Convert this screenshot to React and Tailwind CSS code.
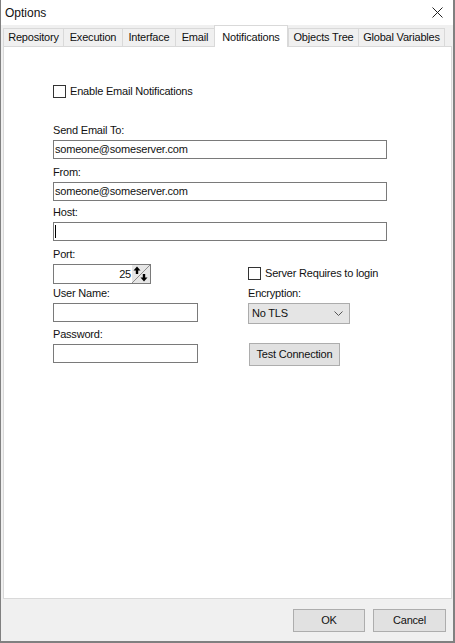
import React from 'react';

const tabs = [
  { name: 'Repository', w: 'w-[61px]' },
  { name: 'Execution', w: 'w-[60px]' },
  { name: 'Interface', w: 'w-[54px]' },
  { name: 'Email', w: 'w-[40px]' },
  { name: 'Notifications', w: 'w-[74px]', active: true },
  { name: 'Objects Tree', w: 'w-[71px]' },
  { name: 'Global Variables', w: 'w-[87px]' },
];

const Label = ({ children }) => <div className="h-[16px] leading-[16px] mb-[2px]">{children}</div>;

const TextBox = ({ value, w, caret }) => (
  <div className={`h-[19px] ${w} border border-[#7a7a7a] bg-white px-[1px] flex items-center leading-none`}>
    {caret ? <span className="w-px h-[13px] bg-black" /> : value}
  </div>
);

const CheckBox = ({ label }) => (
  <div className="flex items-center gap-[4px] h-[13px]">
    <span className="w-[13px] h-[13px] border border-[#333] bg-white" />
    <span>{label}</span>
  </div>
);

const SpinButtons = () => (
  <svg width="18" height="18" viewBox="0 0 18 18" className="block">
    <rect x="0" y="0" width="18" height="18" fill="#e6e6e6" />
    <line x1="0" y1="18" x2="18" y2="0" stroke="#8c8c8c" strokeWidth="1" />
    <path d="M5 1.5 L8.5 5.5 H6.2 V9 H3.8 V5.5 H1.5 Z" fill="#000" />
    <path d="M12 16.5 L8.5 12.5 H10.8 V9 H13.2 V12.5 H15.5 Z" fill="#000" />
  </svg>
);

const App = () => {
  return (
    <div className="w-[455px] h-[643px] flex flex-col bg-[#f0f0f0] border-l border-r-2 border-b-2 border-[#808080] font-['Liberation_Sans',Arial,sans-serif] text-[11px] tracking-[-0.2px] text-[#111]">
      {/* title bar */}
      <div className="h-[25px] bg-white flex items-center justify-between pl-[4px] pr-[10px]">
        <span className="text-[12px] tracking-normal">Options</span>
        <svg width="11" height="11" viewBox="0 0 11 11">
          <path d="M0.5 0.5 L10.5 10.5 M10.5 0.5 L0.5 10.5" stroke="#222" strokeWidth="1" />
        </svg>
      </div>

      {/* tab strip */}
      <div className="h-[21px] flex items-end pl-[2px] relative z-10">
        {tabs.map(t =>
          t.active ? (
            <div
              key={t.name}
              className={`${t.w} h-[22px] -mb-px bg-white border border-b-0 border-[#d9d9d9] flex justify-center pt-[3px]`}>
              {t.name}
            </div>
          ) : (
            <div
              key={t.name}
              className={`${t.w} h-[18px] bg-[#f0f0f0] border border-b-0 border-[#d9d9d9] -mr-px flex items-center justify-center`}>
              {t.name}
            </div>
          )
        )}
      </div>

      {/* notifications page */}
      <div className="flex-1 ml-[2px] mr-[1px] bg-white border border-[#d9d9d9] pl-[49px] pt-[38px]">
        <CheckBox label="Enable Email Notifications" />

        <div className="mt-[24px]">
          <Label>Send Email To:</Label>
          <TextBox value="someone@someserver.com" w="w-[334px]" />
        </div>
        <div className="mt-[5px]">
          <Label>From:</Label>
          <TextBox value="someone@someserver.com" w="w-[334px]" />
        </div>
        <div className="mt-[3px]">
          <Label>Host:</Label>
          <TextBox caret w="w-[334px]" />
        </div>

        <div className="mt-[5px] flex">
          <div className="w-[195px]">
            <Label>Port:</Label>
            <div className="w-[98px] h-[20px] border border-[#7a7a7a] bg-white flex items-center justify-end">
              <span className="pr-[1px]">25</span>
              <SpinButtons />
            </div>
            <div className="mt-[1px]">
              <Label>User Name:</Label>
              <TextBox w="w-[145px]" />
            </div>
            <div className="mt-[4px]">
              <Label>Password:</Label>
              <TextBox w="w-[145px]" />
            </div>
          </div>

          <div>
            <div className="mt-[21px]">
              <CheckBox label="Server Requires to login" />
            </div>
            <div className="mt-[5px]">
              <Label>Encryption:</Label>
              <div className="w-[102px] h-[21px] bg-[#e5e5e5] border border-[#acacac] flex items-center justify-between pl-[3px] pr-[6px]">
                <span>No TLS</span>
                <svg width="9" height="5" viewBox="0 0 9 5">
                  <path d="M0.5 0.5 L4.5 4.5 L8.5 0.5" fill="none" stroke="#555" strokeWidth="1" />
                </svg>
              </div>
            </div>
            <button
              type="button"
              className="mt-[19px] ml-[1px] w-[91px] h-[23px] bg-[#e1e1e1] border border-[#adadad] flex items-center justify-center">
              Test Connection
            </button>
          </div>
        </div>
      </div>

      {/* dialog buttons */}
      <div className="h-[42px] flex items-center justify-end gap-[8px] pr-[7px]">
        <button type="button" className="w-[72px] h-[23px] bg-[#e1e1e1] border border-[#adadad]">
          OK
        </button>
        <button type="button" className="w-[73px] h-[23px] bg-[#e1e1e1] border border-[#adadad]">
          Cancel
        </button>
      </div>
    </div>
  );
};

export default App;
